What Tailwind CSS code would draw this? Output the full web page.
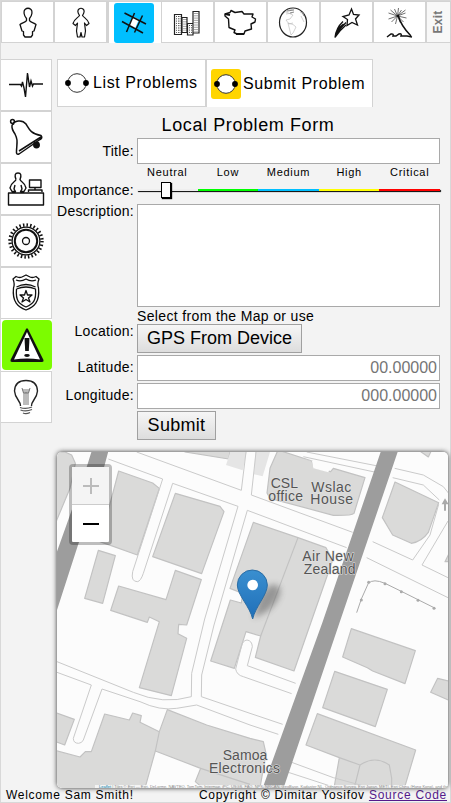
<!DOCTYPE html>
<html lang="en">
<head>
<meta charset="utf-8">
<title>Local Problem Form</title>
<script src="https://cdn.jsdelivr.net/npm/@tailwindcss/browser@4"></script>
</head>
<body class="w-[451px] h-[803px] overflow-hidden bg-[#f3f3f3] text-black font-['Liberation_Sans',Arial,sans-serif]">
<div class="w-[451px] h-[803px] border border-[#d8d8d8] flex flex-col">
  <!-- top navigation -->
  <nav class="flex h-[42px] shrink-0">
    <a class="w-[53px] h-[42px] shrink-0 bg-white border border-[#d3d3d3] flex items-center justify-center">
      <svg width="40" height="40" viewBox="8 1 40 40" fill="none" stroke="#111" stroke-width="1.3" stroke-linejoin="round"><path d="M26.500 17.500C23.500 14 23.500 10 25 8.500Q28 6 31 8.500C32.500 10 32.500 14 29.500 17.500V19.500C30 21.500 34 21.500 36 23.500L34 30L32.500 30.500V34L31 36H25L23.500 34V30.500L22 30L20 23.500C22 21.500 26 21.500 26.500 19.500Z"/></svg>
    </a>
    <a class="w-[53px] h-[42px] shrink-0 bg-white border border-[#d3d3d3] flex items-center justify-center">
      <svg width="40" height="40" viewBox="61 1 40 40" fill="none" stroke="#111" stroke-width="1.200" stroke-linejoin="round"><path d="M79.500 14.500Q76.500 10 79 8Q81 6.500 83 8Q85.500 10 82.500 14.500C84 17 87 17 89 22.500L86.500 24.500L84.500 22L85.500 30L84.500 36H82L81 31.500L80 36H77.500L76.500 30L77.500 22L75.500 24.500L73 22.500C75 17 78 17 79.500 14.500Z"/></svg>
    </a>
    <a class="w-[54px] h-[42px] shrink-0 bg-white border-l-2 border-t border-[#d3d3d3] flex items-center pl-[5px]">
      <span class="w-10 h-10 rounded-[3px] bg-[#00bfff] flex">
        <svg width="40" height="40" viewBox="114 2 40 40" stroke="#111" stroke-width="1.500"><path d="M133 15.500L139 18.500L135 27.500L129 24Z" fill="#fff" stroke="none"/><path d="M124.500 12L146 23M122 20.500L143 32M134.500 12L126.500 31M142.500 14.500L134.500 31.500"/></svg>
      </span>
    </a>
    <a class="w-[53px] h-[42px] shrink-0 bg-white border border-[#d3d3d3] flex items-center justify-center">
      <svg width="40" height="40" viewBox="168 1 40 40" fill="none" stroke="#222" stroke-width="1.200"><path d="M174.500 13.500h7v20h-7zM182 16.500h5v15h-5zM187.500 22.500h5.500v11.500h-5.500zM193 10.500h6v21.500h-6z"/><path d="M176.500 15v17M178.500 15v17M180 15v17M184 18v12M186 18v12M189.500 24v9M191.500 24v9M195 12v19M197 12v19" stroke-width=".8" stroke-dasharray="1 1.300"/></svg>
    </a>
    <a class="w-[53px] h-[42px] shrink-0 bg-white border border-[#d3d3d3] flex items-center justify-center">
      <svg width="40" height="40" viewBox="221 1 40 40" fill="none" stroke="#111" stroke-width="1.400" stroke-linejoin="round"><path d="M225 13L230 11.500L231 9.500L235 11.500L242 10.500L244 13L253 13L252 16L255.500 18L255 21L251 23L251.500 28L245 30L244 33L237 33L234 31.500L235 29L229 26.500L228.500 18L225 15Z"/><path d="M236 33h8M225 13l5 1" stroke-width="2.200"/></svg>
    </a>
    <a class="w-[53px] h-[42px] shrink-0 bg-white border border-[#d3d3d3] flex items-center justify-center">
      <svg width="40" height="40" viewBox="274 1 40 40" fill="none" stroke="#222"><ellipse cx="293" cy="21.500" rx="13.500" ry="14.500" stroke-width="1.200"/><path d="M283 13Q286 9 294 8M286 11l7 3l-3 4l-4 1l3 4l4-1M288 22q6 1 8 4l-3 6l-2 2l-2-8zM300 11l4 2M301 15l3 6M286 13l6-1" stroke="#b5b5b5" stroke-width=".6"/><path d="M287 10l7-1M290 12l4-1M302 11l2 4" stroke="#888"/></svg>
    </a>
    <a class="w-[53px] h-[42px] shrink-0 bg-white border border-[#d3d3d3] flex items-center justify-center">
      <svg width="40" height="40" viewBox="327 1 40 40" fill="none" stroke="#111" stroke-width="1.300"><path d="M351.500 8L353.500 13.500L359 14L355.500 18L357.500 24L352 21.500L347 24.500L347.500 18.500L343 15.500L349 14Z"/><path d="M343 20.500Q336 27 335 36.500Q340 29 346 24M343.500 23Q338 27 336 34M346 21.500Q340 27 336 34"/></svg>
    </a>
    <a class="w-[53px] h-[42px] shrink-0 bg-white border border-[#d3d3d3] flex items-center justify-center">
      <svg width="40" height="40" viewBox="380 1 40 40" fill="none" stroke="#111"><path d="M398 14Q401 25 411 35" stroke-width="1.500"/><path d="M387 36L391 33Q394 32.500 393 35L396 35L399 33Q402 32 401 35L407 35L412 36" stroke-width="1.500"/><path d="M397.500 15l-9-3M397.500 15l-9 3M397.500 15l-6 6M397.500 15l-3-7M397.500 15l1-8M397.500 15l4-6M397.500 15l8-3M397.500 15l9 2M397.500 15l6 6M397.500 15l-2 8M397.500 15l-7-6M397.500 15l8-6M397.500 15l3 7" stroke-width=".6"/></svg>
    </a>
    <a class="flex-1 h-[42px] bg-[#f8f8f8] border border-[#d3d3d3] flex items-center justify-center">
      <span class="-rotate-90 text-[12px] leading-none tracking-[.2px] text-[#777] font-bold">Exit</span>
    </a>
  </nav>

  <div class="flex mt-4 h-[729px] shrink-0">
    <!-- side navigation -->
    <nav class="w-[51px] shrink-0 flex flex-col">
      <a class="h-[52px] bg-white border border-l-0 border-[#d3d3d3] flex items-center justify-center">
        <svg width="50" height="50" viewBox="1 60 50 50" fill="none" stroke="#111" stroke-width="1.400"><path d="M9 84.500H20.500L21.500 86L22.500 82L24 88L25.500 97L27.500 73L29.500 87L31 81L32.500 86L33.500 84H43"/></svg>
      </a>
      <a class="h-[52px] bg-white border border-l-0 border-[#d3d3d3] flex items-center justify-center">
        <svg width="50" height="50" viewBox="1 112 50 50" fill="none" stroke="#111" stroke-width="1.500" stroke-linejoin="round"><circle cx="12.500" cy="121.500" r="1.900"/><path d="M12 125.500C14 120.500 22 119 26 124C29 129 31 134 41 135.500Q43 138 40 139.500L19 154Q16 155 16.500 151C17 142 18 140 15 134Q11.500 129 12 125.500ZM41 137L19 151M13 123.500l1 1"/><circle cx="36.500" cy="145" r="2.700" fill="#111"/></svg>
      </a>
      <a class="h-[52px] bg-white border border-l-0 border-[#d3d3d3] flex items-center justify-center">
        <svg width="50" height="50" viewBox="1 164 50 50" fill="none" stroke="#111" stroke-width="1.400" stroke-linejoin="round"><path d="M8.500 193H43.500V205H8.500ZM29.500 180H41V187.500H29.500ZM35 187.500V190.500M28.500 192V190H42V192M16 179.500Q13.500 173 18 173Q22.500 173 20 179.500C21 182.500 24 181 26 188L24 191.500H20.500L22 189L21 185M16 179.500C15 182.500 12 181 10 188L12 191.500H15.500L14 189L15 185"/></svg>
      </a>
      <a class="h-[52px] bg-white border border-l-0 border-[#d3d3d3] flex items-center justify-center">
        <svg width="50" height="50" viewBox="1 216 50 50" fill="none" stroke="#111"><circle cx="26" cy="241" r="16" stroke-width="3.400" stroke-dasharray="1.500 2.091"/><circle cx="26" cy="241" r="13.900" stroke-width="1.300"/><circle cx="26" cy="241" r="11.200" stroke-width="2"/><circle cx="26" cy="241" r="3.500" stroke-width="1.300"/></svg>
      </a>
      <a class="h-[52px] bg-white border border-l-0 border-[#d3d3d3] flex items-center justify-center">
        <svg width="50" height="50" viewBox="1 268 50 50" fill="none" stroke="#111" stroke-width="1.300" stroke-linejoin="round"><path d="M13 279L16 276.500Q20 278.500 23 276.500L26 275L29 276.500Q32 278.500 36 276.500L39 279Q37 284 38.500 288C40 302 34 307 26 310C18 307 12 302 13.500 288Q15 284 13 279Z"/><path d="M16 280Q21 282 26 279Q31 282 36 280M16.500 287Q26 282 35.500 287M16.500 289C15.500 301 19 304 26 307C33 304 36.500 301 35.500 289Q26 285 16.500 289"/><path d="M26 290.500L27.500 295H32L28.500 298L30 302L26 299.500L22 302L23.500 298L20 295H24.500Z"/></svg>
      </a>
      <a class="h-[52px] pt-px pl-px bg-white flex">
        <span class="w-[50px] h-[50px] rounded-[4px] bg-[#7cfc00] flex">
          <svg width="50" height="50" viewBox="2 320 50 50"><path d="M26 329Q27 327.500 28 329L43.500 360Q44 362 42 362H12Q10 362 10.500 360Z" fill="#111"/><path d="M27 332L40 359.500Q27 357.500 14 359.500Z" fill="#fff"/><path d="M24.500 338H29.500L28.800 351H25.200Z" fill="#111"/><ellipse cx="27" cy="355.500" rx="2.800" ry="1.400" fill="#111"/></svg>
        </span>
      </a>
      <a class="h-[52px] bg-white border border-l-0 border-[#d3d3d3] flex items-center justify-center">
        <svg width="50" height="50" viewBox="1 372 50 50" fill="none" stroke="#222" stroke-width="1.400"><path d="M20.500 406C21 401 15 399 14.500 391Q15 380.500 26 380.500Q37 380.500 37.500 391C37 399 31 401 31.500 406"/><path d="M20 407.500Q26 409.500 32 407M20.500 410Q26 412 32 409.500M23 413Q26 414.500 30 412.500" stroke="#555" stroke-width="1.300"/><path d="M24 405V393M28 405V393M22 388L23.500 393H28.500L30 388M22.500 390H29.500M23 392H29M26 392V405" stroke="#777" stroke-width="1"/></svg>
      </a>
    </nav>

    <main class="ml-[5px] w-[392px] shrink-0 flex flex-col">
      <!-- tabs -->
      <div class="flex h-12 shrink-0 text-[16px] leading-none tracking-[.6px]">
        <a class="w-[149px] bg-white border border-[#d3d3d3] flex items-center pl-1 whitespace-nowrap">
          <svg class="shrink-0 w-[30px] h-[30px]" viewBox="0 0 30 30"><circle cx="15" cy="15" r="9.300" fill="#fff" stroke="#333"/><circle cx="6" cy="15" r="2.900"/><circle cx="24" cy="15" r="2.900"/></svg>
          <span class="ml-px">List Problems</span>
        </a>
        <a class="w-[167px] bg-white border border-b-0 border-[#d3d3d3] flex items-center pl-1 whitespace-nowrap">
          <span class="bg-[#ffd500] rounded-[3px] flex"><svg class="w-[30px] h-[30px]" viewBox="0 0 30 30"><circle cx="15" cy="15" r="9.300" fill="#fff" stroke="#333"/><circle cx="6" cy="15" r="2.900"/><circle cx="24" cy="15" r="2.900"/></svg></span>
          <span class="ml-0.5">Submit Problem</span>
        </a>
      </div>
      <!-- form -->
      <form class="flex flex-col h-[345px] shrink-0 text-[14px] leading-4">
        <h1 class="text-[18px] leading-[20px] h-[31px] pt-2 text-center tracking-[.6px] pr-[10px]">Local Problem Form</h1>
        <div class="flex h-[27px]">
          <label class="w-[80px] pr-[3px] pt-[5px] text-right tracking-[.3px]">Title:</label>
          <input class="w-[303px] h-[26px] bg-white border border-[#a9a9a9]">
        </div>
        <div class="flex h-[39px]">
          <label class="w-[80px] pr-[3px] pt-[17px] text-right tracking-[.25px]">Importance:</label>
          <div class="w-[303px]">
            <div class="grid grid-cols-5 text-center text-[11px] leading-[13px] tracking-[.7px] h-[24px] pt-px"><span>Neutral</span><span>Low</span><span>Medium</span><span>High</span><span>Critical</span></div>
            <div class="relative grid grid-cols-5 h-[2px] shadow-[1px_1px_1px_#000]"><i class="bg-[#eee]"></i><i class="bg-[#0f0]"></i><i class="bg-[#00bfff]"></i><i class="bg-[#ff0]"></i><i class="bg-[#f00]"></i>
              <b class="absolute left-[24px] -top-[7px] w-[10px] h-4 bg-white border border-black shadow-[1px_1px_1px_#000]"></b>
            </div>
          </div>
        </div>
        <div class="flex h-[103px]">
          <label class="w-[80px] pr-[3px] text-right tracking-[.25px] leading-[14px]">Description:</label>
          <textarea class="w-[303px] h-[103px] resize-none bg-white border border-[#a9a9a9]"></textarea>
        </div>
        <div class="flex h-[48px]">
          <label class="w-[80px] pr-[3px] pt-4 text-right tracking-[.3px]">Location:</label>
          <div class="w-[303px] pt-px"><p class="tracking-[.35px] h-4">Select from the Map or use</p>
            <button type="button" class="block w-[165px] h-[29px] border border-[#a0a0a0] bg-linear-to-b from-[#f6f6f6] to-[#dddddd] text-[18px] leading-[27px] whitespace-nowrap">GPS From Device</button></div>
        </div>
        <div class="flex h-[28px]">
          <label class="w-[80px] pr-[3px] pt-1 text-right tracking-[.3px]">Latitude:</label>
          <input class="w-[303px] h-[26px] bg-white border border-[#a9a9a9] px-[2px] text-right text-[16px] placeholder:text-[#757575]" placeholder="00.00000">
        </div>
        <div class="flex h-[28px]">
          <label class="w-[80px] pr-[3px] pt-1 text-right tracking-[.3px]">Longitude:</label>
          <input class="w-[303px] h-[26px] bg-white border border-[#a9a9a9] px-[2px] text-right text-[16px] placeholder:text-[#757575]" placeholder="000.00000">
        </div>
        <button type="button" class="ml-[80px] w-[79px] h-[29px] border border-[#a0a0a0] bg-linear-to-b from-[#f6f6f6] to-[#dddddd] text-[18px] leading-[27px] tracking-[.3px]">Submit</button>
      </form>
      <!-- map -->
      <div class="relative w-[391px] h-[336px] shrink-0 rounded-[5px] shadow-[0_0_5px_#333]">
        <div class="w-full h-full rounded-[5px] overflow-hidden">
        <svg class="block w-[391px] h-[336px]" viewBox="21 21 1173 1008" font-family="Liberation Sans, Arial, sans-serif">
          <defs>
            <linearGradient id="pin" x1="0" y1="0" x2="0" y2="1"><stop offset="0" stop-color="#3a8fd0"/><stop offset="1" stop-color="#1f6fb8"/></linearGradient>
            <filter id="soft" x="-50%" y="-50%" width="200%" height="200%"><feGaussianBlur stdDeviation="10"/></filter>
          </defs>
          <rect x="0" y="0" width="1220" height="1050" fill="#fcfcfc"/>
          <!-- buildings -->
          <g fill="#dadad9" stroke="#c2c2c2" stroke-width="3.500" stroke-linejoin="round">
            <path d="M10 21H45L65 30L76 55L60 130L10 250Z"/>
            <path d="M206 78L308 114L328 130L262 330L150 290Z"/>
            <path d="M376 145L510 184L522 200L455 386L308 335Z"/>
            <path d="M145 316L196 332L158 475L104 460Z"/>
            <path d="M376 376L454 404L410 540L386 538L384 566L410 580L364 752L268 728L328 530L298 516L292 532L182 496L206 423L348 464Z"/>
            <path d="M405 21L536 42L541 15H405Z"/>
            <path d="M684 15L786 48L792 68L842 80L850 70L945 98L912 205Q905 212 850 211L660 160L651 144L660 70Z"/>
            <path d="M1035 111L1166 173L1135 262Q1115 290 1084 295L1028 270L997 218Z"/>
            <path d="M610 232L744 278L828 308L848 345L732 678L616 637L632 573L588 560L553 670L482 648L541 465L574 474L578 445L540 430Z"/>
            <path d="M744 278L632 573" fill="none"/>
            <path d="M10 800L73 823L44 900L10 887Z"/>
            <path d="M10 915L90 936L106 920L124 920L164 807L238 825L248 804L274 812L270 832L328 860L352 794L470 840L600 880L640 890L648 925L628 1040H470L436 1010L452 970L316 918L282 1040H10Z"/>
            <path d="M328 860L316 918M452 970L600 1018" fill="none"/>
            <path d="M904 551L1096 617L1065 716L968 678L952 668L878 636Z"/>
            <path d="M854 679L1012 733L976 845L818 788Z"/>
            <path d="M802 806L1097 915L1060 1040H850L868 938L768 900Z"/>
            <path d="M868 938L930 960Q975 930 1018 960L1025 1000V1040M930 960L910 1040" fill="none"/>
            <path d="M1163 700L1210 712V772L1142 742ZM1105 15L1135 36L1145 15ZM1210 300L1185 350H1210Z"/>
          </g>
          <g fill="#e5e5e5"><path d="M541 21H590L578 76L528 60Z"/><path d="M616 21H660L638 94L612 88Z"/></g>
          <path d="M688 21L742 36L842 62L835 82L790 70L786 48Z" fill="#fcfcfc"/>
          <!-- street outlines -->
          <g fill="none" stroke="#cacaca" stroke-width="3">
            <path d="M175 42L338 102L248 380Q242 410 262 410Q272 409 280 385L368 115L564 184L464 522L425 685L424 755Q340 780 250 742L21 650"/>
            <path d="M260 21L574 136L588 21M618 21L604 150L908 262M592 196L890 308M592 196L492 540L455 690L454 755L600 805L698 838M21 682L124 720L70 880Q70 895 86 895Q96 894 100 885L156 732L270 770Q330 798 380 790L440 780L600 840L685 868"/>
            <path d="M770 21L978 62M760 35L978 82M1028 98L1120 120L1168 165M1166 178L1140 270L1088 345L968 290M1034 70L1120 90L1180 125L1200 150M1194 228L1116 360L1194 398M950 338L1194 458M737 715L592 662L607 605Q606 587 591 585Q578 587 575 602L557 672Q560 690 580 695L725 746M725 952L850 998L960 1028M715 982L850 1026"/>
            <path d="M920 503L934 462L955 415Q970 400 1005 415L1056 440L1106 465L1156 490" stroke="#aaa"/>
          </g>
          <g fill="#aaa"><circle cx="934" cy="465" r="4.500"/><circle cx="956" cy="412" r="4.500"/><circle cx="1005" cy="416" r="4.500"/><circle cx="1054" cy="440" r="4.500"/><circle cx="1104" cy="466" r="4.500"/><circle cx="1152" cy="490" r="4.500"/></g>
          <path d="M1185 160L1175 178H1182V197H1188V178H1196Z" fill="#aaa"/>
          <!-- main roads -->
          <path d="M126 15H176L160 75L84 300L21 495L10 520V350L60 210L112 60Z" fill="#9d9d9d"/>
          <path d="M994 15H1045L868 535L697 1040H634L818 530Z" fill="#9d9d9d"/>
          <!-- labels -->
          <g fill="#555" stroke="#e4e4e4" stroke-width="3" paint-order="stroke" font-size="42">
            <text x="662" y="130" textLength="82">CSL</text><text x="655" y="168" textLength="104">office</text>
            <text x="784" y="140" textLength="120">Wslac</text><text x="781" y="178" textLength="128">House</text>
            <text x="757" y="349" textLength="154">Air New</text><text x="761" y="387" textLength="156">Zealand</text>
            <text x="518" y="945" textLength="134">Samoa</text><text x="477" y="984" textLength="213">Electronics</text>
          </g>
          <!-- marker -->
          <path d="M610 520L630 450Q670 400 690 430Q695 465 650 500Z" fill="#444" opacity=".45" filter="url(#soft)"/>
          <path d="M608 522C600 485 562 450 562 420A45 45 0 0 1 652 420C652 450 616 485 608 522Z" fill="url(#pin)" stroke="#2a6da5" stroke-width="3"/>
          <circle cx="608" cy="420" r="16" fill="#fff"/>
        </svg>
        </div>
        <div class="absolute right-0 bottom-0 w-[353px] h-[3px] overflow-hidden bg-white/70 text-[4px] leading-[4px] text-[#888] whitespace-nowrap rounded-br-[5px]"><span class="text-[#0078a8] ml-1">Leaflet</span> | Tiles © Esri — Esri, DeLorme, NAVTEQ, TomTom, Intermap, iPC, USGS, FAO, NPS, NRCAN, GeoBase, Kadaster NL, Ordnance Survey, Esri Japan, METI, Esri China (Hong Kong), and the GIS User Community</div>
        <div class="absolute left-[12px] top-[12px] w-[43px] h-[81px] border-[3px] border-black/25 bg-clip-padding bg-white rounded-[4px] flex flex-col">
          <button class="h-[38px] bg-[#f4f4f4] border-b border-[#ccc] flex items-center justify-center"><svg width="16" height="16"><path d="M0 8H16M8 0V16" stroke="#bbb" stroke-width="2"/></svg></button>
          <button class="h-[37px] flex items-center justify-center"><svg width="16" height="16"><path d="M0 8H16" stroke="#000" stroke-width="2"/></svg></button>
        </div>
      </div>
    </main>
  </div>
  <!-- footer -->
  <footer class="flex-1 flex justify-between pl-[5px] pr-[3px] text-[12px] leading-[14px] whitespace-nowrap">
    <span class="tracking-[.7px]">Welcome Sam Smith!</span>
    <span class="tracking-[.73px]">Copyright © Dimitar Yosifov <a class="underline text-[#551a8b]">Source Code</a></span>
  </footer>
</div>
</body>
</html>
